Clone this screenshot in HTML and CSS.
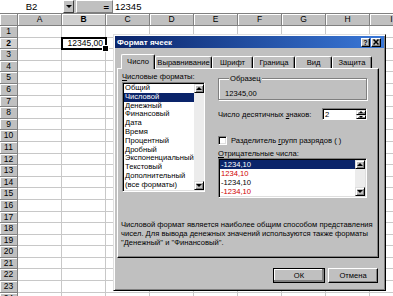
FILE: index.html
```html
<!DOCTYPE html>
<html>
<head>
<meta charset="utf-8">
<link rel="stylesheet" href="styles.css">
</head>
<body>
<div class="app">
  <div class="fbar">
    <div class="namebox">B2</div>
    <div class="dropbtn"><span class="tri-down"></span></div>
    <div class="eqbox">=</div>
    <div class="finput">12345</div>
  </div>
  <div class="colheads">
    <div class="corner"></div>
    <div class="ch">A</div><div class="ch on">B</div><div class="ch">C</div><div class="ch">D</div><div class="ch">E</div><div class="ch">F</div><div class="ch">G</div><div class="ch">H</div><div class="ch">I</div>
  </div>
  <div class="rows">
    <div class="row"><div class="rh">1</div><div class="cells"></div></div>
    <div class="row"><div class="rh on">2</div><div class="cells"><div class="active">12345,00</div></div></div>
    <div class="row"><div class="rh">3</div><div class="cells"></div></div>
    <div class="row"><div class="rh">4</div><div class="cells"></div></div>
    <div class="row"><div class="rh">5</div><div class="cells"></div></div>
    <div class="row"><div class="rh">6</div><div class="cells"></div></div>
    <div class="row"><div class="rh">7</div><div class="cells"></div></div>
    <div class="row"><div class="rh">8</div><div class="cells"></div></div>
    <div class="row"><div class="rh">9</div><div class="cells"></div></div>
    <div class="row"><div class="rh">10</div><div class="cells"></div></div>
    <div class="row"><div class="rh">11</div><div class="cells"></div></div>
    <div class="row"><div class="rh">12</div><div class="cells"></div></div>
    <div class="row"><div class="rh">13</div><div class="cells"></div></div>
    <div class="row"><div class="rh">14</div><div class="cells"></div></div>
    <div class="row"><div class="rh">15</div><div class="cells"></div></div>
    <div class="row"><div class="rh">16</div><div class="cells"></div></div>
    <div class="row"><div class="rh">17</div><div class="cells"></div></div>
    <div class="row"><div class="rh">18</div><div class="cells"></div></div>
    <div class="row"><div class="rh">19</div><div class="cells"></div></div>
    <div class="row"><div class="rh">20</div><div class="cells"></div></div>
    <div class="row"><div class="rh">21</div><div class="cells"></div></div>
    <div class="row"><div class="rh">22</div><div class="cells"></div></div>
    <div class="row"><div class="rh">23</div><div class="cells"></div></div>
    <div class="row"><div class="rh">24</div><div class="cells"></div></div>
  </div>

  <div class="dialog">
    <div class="titlebar">
      <span class="title">Формат ячеек</span>
      <div class="tbtns">
        <span class="tbtn help">?</span>
        <span class="tbtn close"><svg width="6" height="6" viewBox="0 0 6 6"><path d="M0.5 0.5L5.5 5.5M5.5 0.5L0.5 5.5" stroke="#000" stroke-width="1.5"/></svg></span>
      </div>
    </div>
    <div class="tabs">
      <div class="tab on t1">Число</div>
      <div class="tab t2">Выравнивание</div>
      <div class="tab t3">Шрифт</div>
      <div class="tab t4">Граница</div>
      <div class="tab t5">Вид</div>
      <div class="tab t6">Защита</div>
    </div>
    <div class="panel">
      <div class="main">
        <div class="leftcol">
          <div class="lbl"><u>Ч</u>исловые форматы:</div>
          <div class="listbox fmt">
            <div class="items">
              <div class="item">Общий</div>
              <div class="item sel">Числовой</div>
              <div class="item">Денежный</div>
              <div class="item">Финансовый</div>
              <div class="item">Дата</div>
              <div class="item">Время</div>
              <div class="item">Процентный</div>
              <div class="item">Дробный</div>
              <div class="item">Экспоненциальный</div>
              <div class="item">Текстовый</div>
              <div class="item">Дополнительный</div>
              <div class="item">(все форматы)</div>
            </div>
            <div class="vscroll">
              <div class="sbtn"><span class="tri-up"></span></div>
              <div class="track"></div>
              <div class="sbtn"><span class="tri-down"></span></div>
            </div>
          </div>
        </div>
        <div class="rightcol">
          <fieldset class="sample">
            <legend class="sample-lbl">Образец</legend>
            <div class="sample-val">12345,00</div>
          </fieldset>
          <div class="decrow">
            <span>Число десятичных <u>з</u>наков:</span>
            <div class="spin">
              <span class="spin-val">2</span>
              <div class="spin-btns">
                <div class="spbtn"><span class="tri-up"></span></div>
                <div class="spbtn"><span class="tri-down"></span></div>
              </div>
            </div>
          </div>
          <div class="checkrow">
            <span class="checkbox"></span>
            <span>Разделитель <u>г</u>рупп разрядов ( )</span>
          </div>
          <div class="lbl neg-lbl"><u>О</u>трицательные числа:</div>
          <div class="listbox neg">
            <div class="items">
              <div class="item sel">-1234,10</div>
              <div class="item red">1234,10</div>
              <div class="item">-1234,10</div>
              <div class="item red">-1234,10</div>
            </div>
            <div class="vscroll">
              <div class="sbtn"><span class="tri-up"></span></div>
              <div class="track"></div>
              <div class="sbtn"><span class="tri-down"></span></div>
            </div>
          </div>
        </div>
      </div>
      <p class="desc">Числовой формат является наиболее общим способом представления чисел. Для вывода денежных значений используются также форматы "Денежный" и "Финансовый".</p>
    </div>
    <div class="buttons">
      <div class="btn def">ОК</div>
      <div class="btn cancel">Отмена</div>
    </div>
  </div>
</div>
</body>
</html>
```

FILE: styles.css
```css
* { box-sizing: border-box; }
html, body { margin: 0; padding: 0; }
body {
  width: 393px;
  height: 296px;
  overflow: hidden;
  background: #fff;
  font-family: "Liberation Sans", Arial, sans-serif;
  color: #000;
}
.app { position: relative; width: 393px; height: 296px; overflow: hidden; }

/* triangles */
.tri-down, .tri-up {
  display: block;
  width: 0; height: 0;
  border-left: 3px solid transparent;
  border-right: 3px solid transparent;
}
.tri-down { border-top: 3px solid #000; }
.tri-up { border-bottom: 3px solid #000; }

/* formula bar */
.fbar {
  display: flex;
  height: 14px;
  background: #c0c0c0;
  border-bottom: 1px solid #808080;
  font-size: 9.5px;
  line-height: 13px;
}
.namebox { width: 63px; background: #fff; text-align: center; }
.dropbtn {
  width: 11px;
  border: 1px solid;
  border-color: #fff #404040 #404040 #fff;
  display: flex; align-items: center; justify-content: center;
}
.eqbox {
  width: 37px;
  margin-left: 2px;
  text-align: right;
  padding-right: 3px;
  font-weight: bold;
  border: 1px solid;
  border-color: #fff #808080 #808080 #fff;
}
.finput { flex: 1; background: #fff; padding-left: 2px; }

/* headers */
.colheads { display: flex; height: 12px; }
.corner, .ch, .rh {
  background: #c0c0c0;
  border-right: 1px solid #808080;
  border-bottom: 1px solid #808080;
  box-shadow: inset 1px 1px #fff;
  font-size: 8.5px;
  text-align: center;
  flex: none;
}
.corner { width: 18px; }
.ch { width: 44px; line-height: 11px; }
.ch.on, .rh.on { font-weight: bold; background: #d0d0d0; }

.rows { display: flex; flex-direction: column; }
.row { display: flex; height: 11.6px; flex: none; }
.rh { width: 18px; line-height: 10.6px; }
.cells {
  flex: 1;
  display: flex;
  border-bottom: 1px solid #c8c8c8;
  background: linear-gradient(to left, #c8c8c8 1px, transparent 1px) 0 0 / 44px 100% repeat-x;
}
.active {
  position: relative;
  z-index: 1;
  margin-left: 43px;
  margin-top: -1px;
  width: 46px;
  height: 13px;
  border: 2px solid #000;
  background: #fff;
  font-size: 8.5px;
  line-height: 9px;
  text-align: right;
  padding-right: 2px;
}
.active::after {
  content: "";
  position: absolute;
  right: -4px; bottom: -4px;
  width: 5px; height: 5px;
  background: #000;
  border: 1px solid #fff;
}

/* dialog */
.dialog {
  position: absolute;
  left: 113px; top: 34px;
  width: 273px; height: 257px;
  background: #c0c0c0;
  border: 1px solid;
  border-color: #dfdfdf #000 #000 #dfdfdf;
  box-shadow: inset 1px 1px #fff, inset -1px -1px #808080;
  padding: 1px;
  font-size: 7.6px;
  line-height: 9px;
  display: flex;
  flex-direction: column;
}
.titlebar {
  height: 12px;
  flex: none;
  background: linear-gradient(to right, #0a246a, #3a78d8);
  display: flex;
  align-items: center;
  justify-content: space-between;
  padding: 0 3px 0 2px;
  color: #fff;
  font-weight: bold;
  font-size: 8px;
}
.tbtns { display: flex; gap: 1px; }
.tbtn {
  width: 10px; height: 9px;
  background: #c0c0c0;
  border: 1px solid;
  border-color: #fff #000 #000 #fff;
  box-shadow: inset -1px -1px #808080;
  color: #000;
  font-size: 7px;
  line-height: 7px;
  display: flex; align-items: center; justify-content: center;
}
.tbtn.help { width: 9px; }

.tabs {
  display: flex;
  align-items: flex-end;
  height: 14px;
  margin-top: 6px;
  padding-left: 6px;
  flex: none;
  position: relative;
  z-index: 1;
}
.tab {
  height: 12px;
  border: 1px solid;
  border-bottom: none;
  border-color: #fff #000 #000 #fff;
  box-shadow: inset -1px 0 #808080;
  border-radius: 2px 2px 0 0;
  text-align: center;
  line-height: 11px;
  background: #c0c0c0;
}
.tab.on { height: 15px; margin-bottom: -1px; line-height: 13px; }
.t1 { width: 34px; }
.t2 { width: 57px; }
.t3 { width: 41px; }
.t4 { width: 42px; }
.t5 { width: 37px; }
.t6 { width: 40px; }

.panel {
  margin-left: 2px;
  width: 262px;
  height: 190px;
  flex: none;
  border: 1px solid;
  border-color: #fff #000 #000 #fff;
  box-shadow: inset -1px -1px #808080;
  padding: 3px 0 0 4px;
}
.main { display: flex; gap: 13px; }
.leftcol { width: 83px; flex: none; }
.rightcol { width: 149px; flex: none; }
.lbl { height: 9px; margin-bottom: 1px; white-space: nowrap; }

.listbox {
  display: flex;
  background: #fff;
  border: 1px solid;
  border-color: #808080 #fff #fff #808080;
  box-shadow: inset 1px 1px #000, inset -1px -1px #dfdfdf;
  padding: 1px;
}
.listbox.fmt { height: 109.6px; }
.items { flex: 1; }
.item { height: 8.8px; line-height: 8.8px; padding-left: 1px; white-space: nowrap; }
.item.sel { background: #0a246a; color: #fff; }
.item.red { color: #d00000; }
.vscroll { width: 10px; display: flex; flex-direction: column; flex: none; }
.track { flex: 1; background: #ececec; }
.sbtn, .spbtn {
  background: #c0c0c0;
  border: 1px solid;
  border-color: #dfdfdf #000 #000 #dfdfdf;
  box-shadow: inset 1px 1px #fff, inset -1px -1px #808080;
  display: flex; align-items: center; justify-content: center;
}
.sbtn { height: 9px; }

.sample {
  margin: 2px 0 0 0;
  padding: 6px 6px 1px 6px;
  border: 1px solid #808080;
  box-shadow: inset 1px 1px #fff, 1px 1px #fff;
  min-width: 0;
}
.sample-lbl { padding: 0 1px; margin-left: 4px; background: #c0c0c0; line-height: 9px; }
.sample-val { height: 9px; }

.decrow {
  margin-top: 8px;
  height: 12px;
  display: flex;
  align-items: center;
  justify-content: space-between;
  white-space: nowrap;
}
.spin {
  width: 45px; height: 12px;
  background: #fff;
  border: 1px solid;
  border-color: #808080 #fff #fff #808080;
  box-shadow: inset 1px 1px #000;
  display: flex;
  padding: 1px 0 0 1px;
}
.spin-val { flex: 1; padding-left: 1px; line-height: 9px; }
.spin-btns { width: 10px; display: flex; flex-direction: column; }
.spbtn { flex: 1; }
.spbtn .tri-up { border-width: 0 2px 2px; }
.spbtn .tri-down { border-width: 2px 2px 0; }

.checkrow {
  margin-top: 16px;
  height: 9px;
  display: flex;
  align-items: center;
  white-space: nowrap;
}
.checkbox {
  width: 9px; height: 9px;
  background: #fff;
  border: 1px solid;
  border-color: #808080 #fff #fff #808080;
  box-shadow: inset 1px 1px #000, inset -1px -1px #dfdfdf;
  margin-right: 4px;
  flex: none;
}
.neg-lbl { margin-top: 4px; margin-bottom: 0; }
.listbox.neg { height: 40px; }
.listbox.neg .item { height: 9px; line-height: 9px; }

.desc {
  margin: 22px 0 0 -1px;
  width: 252px;
  line-height: 9.2px;
}

.buttons {
  display: flex;
  justify-content: flex-end;
  gap: 3px;
  margin-top: 10px;
  padding-right: 6px;
}
.btn {
  height: 15px;
  width: 50px;
  background: #c0c0c0;
  border: 1px solid;
  border-color: #fff #000 #000 #fff;
  box-shadow: inset -1px -1px #808080;
  text-align: center;
  line-height: 13px;
}
.btn.def { width: 52px; outline: 1px solid #000; outline-offset: -1px; box-shadow: inset -2px -2px #808080, inset 1px 1px #fff; }
```
